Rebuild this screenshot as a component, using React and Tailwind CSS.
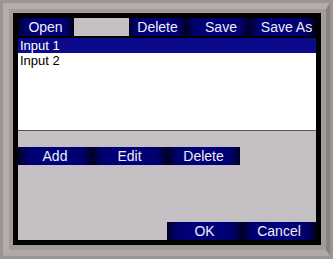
export default function App() {
  const btn =
    "flex items-center justify-center text-[14px] text-[#eeeef4] bg-[linear-gradient(90deg,#000028_0%,#000070_14%,#00007e_50%,#000070_86%,#000028_100%)]";
  return (
    <div className="w-[333px] h-[259px] bg-[#9c9492] pt-[3px] pl-[3px] pr-[3px] pb-[3px] font-['Liberation_Sans',Arial,sans-serif]">
      <div className="w-full h-full border-t-[6px] border-l-[6px] border-r-[4px] border-b-[6px] border-t-[#b4adab] border-l-[#b4adab] border-r-[#8a8280] border-b-[#b0a9a7] bg-[#a39b99] pt-[4px] pl-[4px]">
        <div className="w-[308px] h-[232px] bg-black pt-[5px] pl-[5px] pr-[5px] pb-[5px] flex flex-col">
          <div className="flex h-[18px] leading-none">
            <div className={`${btn} w-[55px]`}>Open</div>
            <div className="w-[56px] bg-[#c4c0c3] border-l border-black"></div>
            <div className={`${btn} w-[57px]`}>Delete</div>
            <div className={`${btn} w-[63px] pl-[7px]`}>Save</div>
            <div className={`${btn} w-[66px] pl-[9px] whitespace-nowrap`}>Save As</div>
          </div>
          <div className="h-[2px]"></div>
          <div className="flex-1 flex flex-col bg-[#c4c0c3]">
            <div className="h-[93px] bg-white flex flex-col text-[13px] leading-none pl-[2px] border-b border-[#555]">
              <div className="h-[15px] bg-[#0a0a8a] text-white flex items-center -ml-[2px] pl-[2px]">Input 1</div>
              <div className="h-[14px] text-black flex items-center">Input 2</div>
            </div>
            <div className="h-[16px]"></div>
            <div className="flex h-[18px] leading-none">
              <div className={`${btn} w-[74px]`}>Add</div>
              <div className={`${btn} w-[75px]`}>Edit</div>
              <div className={`${btn} w-[73px]`}>Delete</div>
            </div>
            <div className="flex-1"></div>
            <div className="flex h-[18px] leading-none justify-end">
              <div className={`${btn} w-[75px]`}>OK</div>
              <div className={`${btn} w-[74px]`}>Cancel</div>
            </div>
          </div>
        </div>
      </div>
    </div>
  );
}
